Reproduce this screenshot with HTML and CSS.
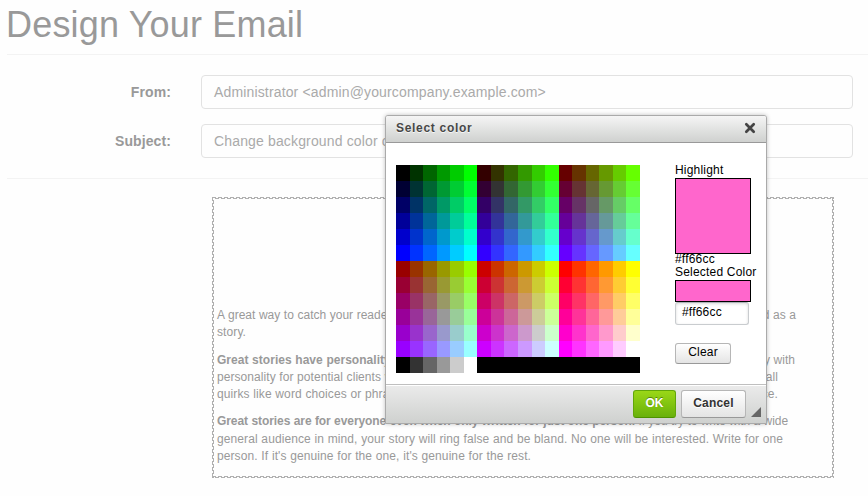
FILE: index.html
```html
<!DOCTYPE html>
<html lang="en">
<head>
<meta charset="utf-8">
<title>Design Your Email</title>
<link rel="stylesheet" href="styles.css">
</head>
<body>
<main class="page">
  <h1 class="title">Design Your Email</h1>
  <form class="fields">
    <div class="field"><label><span class="fit from">From:</span></label><div class="control"><span class="fit">Administrator &lt;admin@yourcompany.example.com&gt;</span></div></div>
    <div class="field"><label><span class="fit from">Subject:</span></label><div class="control"><span class="fit">Change background color of</span></div></div>
  </form>
  <article class="letter">
    <p>
      <span class="line l1">A great way to catch your reader's attention is to tell a story. Everything you consider writing can be told as a</span>
      <span class="line l2">story.</span>
    </p>
    <p>
      <span class="line l3"><b>Great stories have personality.</b> Consider telling a great story that provides personality. Writing a story with</span>
      <span class="line l4">personality for potential clients will assists with making a relationship connection. This shows up in small</span>
      <span class="line l5">quirks like word choices or phrases. Write from your point of view, not from someone else's experience.</span>
    </p>
    <p>
      <span class="line l6"><b>Great stories are for everyone even when only written for just one person.</b> If you try to write with a wide</span>
      <span class="line l7">general audience in mind, your story will ring false and be bland. No one will be interested. Write for one</span>
      <span class="line l8">person. If it's genuine for the one, it's genuine for the rest.</span>
    </p>
  </article>
</main>
<section class="dialog">
  <header class="dialog-head">
    <span>Select color</span>
    <svg class="close" width="12" height="12" viewBox="0 0 12 12"><path d="M2.3 2.3 9.7 9.7M9.7 2.3 2.3 9.7" stroke="#444" stroke-width="2.7" stroke-linecap="round"/></svg>
  </header>
  <div class="dialog-body">
    <div class="palette" id="palette"></div>
    <div class="picked">
      <div class="label">Highlight</div>
      <div class="swatch big"></div>
      <div class="label">#ff66cc</div>
      <div class="label wide">Selected Color</div>
      <div class="swatch small"></div>
      <div class="hex">#ff66cc</div>
      <div class="clear">Clear</div>
    </div>
  </div>
  <footer class="dialog-foot">
    <div class="btn ok">OK</div>
    <div class="btn cancel">Cancel</div>
    <svg class="grip" width="10" height="10" viewBox="0 0 10 10"><path d="M10 0V10H0Z" fill="#666"/></svg>
  </footer>
</section>
<script src="script.js"></script>
</body>
</html>
```
FILE: styles.css
```css
* { box-sizing: border-box; }
body {
  margin: 0;
  width: 868px;
  height: 496px;
  overflow: hidden;
  position: relative;
  background: #fefefe;
  font-family: "Liberation Sans", Arial, sans-serif;
}
.page { padding-left: 7px; }
.title {
  margin: 0;
  height: 55px;
  padding-top: 5px;
  border-bottom: 1px solid #f3f3f3;
  font-size: 36px;
  line-height: 40px;
  font-weight: 400;
  letter-spacing: .18px;
  text-indent: -1px;
  color: #999;
}
.fields {
  height: 124px;
  padding-top: 20px;
  border-bottom: 1px solid #f3f3f3;
  font-size: 14px;
}
.field { display: flex; height: 34px; margin-bottom: 15px; line-height: 34px; }
.field label { width: 164px; font-weight: 700; color: #999; display: flex; justify-content: flex-end; }
.control {
  width: 652px;
  margin-left: 30px;
  padding-left: 12px;
  border: 1px solid #e2e2e2;
  border-radius: 4px;
  line-height: 33px;
  color: #aaa;
}
.fit { display: block; white-space: nowrap; letter-spacing: .15px; }
.from { letter-spacing: .1px; }
.letter {
  --h: #b0b0b0 0 4px, transparent 4px 6px;
  --i: #b0b0b0 0 1px, transparent 1px 3px, #b0b0b0 3px 6px;
  width: 622px;
  height: 281px;
  margin: 18px 0 0 205px;
  padding: 110px 5px 0;
  font-size: 12px;
  color: #999;
  background:
    repeating-linear-gradient(90deg, var(--h)) 0 0 / 100% 1px no-repeat,
    repeating-linear-gradient(90deg, var(--i)) 0 1px / 100% 1px no-repeat,
    repeating-linear-gradient(90deg, var(--h)) 0 279px / 100% 1px no-repeat,
    repeating-linear-gradient(90deg, var(--i)) 0 280px / 100% 1px no-repeat,
    repeating-linear-gradient(180deg, var(--h)) 0 0 / 1px 100% no-repeat,
    repeating-linear-gradient(180deg, var(--i)) 1px 0 / 1px 100% no-repeat,
    repeating-linear-gradient(180deg, var(--h)) 620px 0 / 1px 100% no-repeat,
    repeating-linear-gradient(180deg, var(--i)) 621px 0 / 1px 100% no-repeat;
}
.letter p { margin: 0 0 10px; }
.line {
  display: block;
  height: 17.3px;
  line-height: 17.3px;
  letter-spacing: .1px;
  text-align-last: justify;
}
.l1 { width: 579px; letter-spacing: -.02px; }
.l2 { width: 28px; }
.l3 { width: 578px; letter-spacing: .03px; }
.l4 { width: 561px; letter-spacing: .06px; }
.l5 { width: 561px; }
.l6 { width: 571px; letter-spacing: -.07px; }
.l7 { width: 566px; }
.l8 { width: 314px; letter-spacing: .08px; }
.dialog {
  position: absolute;
  left: 385px;
  top: 115px;
  width: 382px;
  height: 309px;
  border: 1px solid #aaa;
  border-radius: 3px 3px 0 0;
  background: #fff;
  box-shadow: 0 0 4px rgba(0, 0, 0, .25);
  font-size: 12px;
  color: #000;
}
.dialog-head {
  display: flex;
  justify-content: space-between;
  height: 27px;
  padding: 0 10px;
  border-bottom: 1px solid #999;
  border-radius: 2px 2px 0 0;
  background: linear-gradient(#f5f5f5, #cfd1cf);
  font-weight: 700;
  line-height: 24px;
  color: #474747;
  text-shadow: 0 1px 0 rgba(255, 255, 255, .75);
  letter-spacing: .7px;
}
.close { margin-top: 6px; }
.dialog-body { display: flex; height: 241px; padding: 22px 0 0 10px; }
.palette { display: grid; flex: none; grid-template-columns: repeat(18, 1fr); grid-auto-rows: 16px; width: 244px; }
.picked { width: 90px; margin-left: 35px; letter-spacing: .2px; white-space: nowrap; }
.label { height: 13px; line-height: 10px; }
.label.wide { line-height: 10px; }
.swatch { width: 76px; border: 1px solid #000; background: #f6c; }
.big { height: 76px; }
.small { height: 22px; }
.hex {
  width: 74px;
  height: 23px;
  padding-left: 6px;
  border: 1px solid #c9cccf;
  border-top-color: #aeb3b9;
  border-radius: 3px;
  line-height: 18px;
  box-shadow: inset 0 1px 3px rgba(0, 0, 0, .15);
}
.clear {
  width: 56px;
  height: 21px;
  margin-top: 18px;
  border: 1px solid #b6b6b6;
  border-bottom-color: #999;
  border-radius: 3px;
  background: linear-gradient(#fff, #e4e4e4);
  line-height: 17px;
  text-align: center;
}
.dialog-foot {
  display: flex;
  height: 39px;
  padding: 5px 5px 0 247px;
  border-top: 1px solid #bfbfbf;
  background: linear-gradient(#ebebeb, #cfd1cf);
  box-shadow: inset 0 1px 0 #fff;
}
.btn {
  height: 28px;
  border: 1px solid #b6b6b6;
  border-bottom-color: #999;
  border-radius: 3px;
  background: linear-gradient(#fff, #e4e4e4);
  font-weight: 700;
  line-height: 24px;
  text-align: center;
  color: #333;
}
.ok {
  width: 43px;
  border-color: #62a60a #62a60a #4d9200;
  background: linear-gradient(#9ad717, #69b10b);
  color: #fff;
  text-shadow: 0 -1px 0 #55830c;
}
.cancel { width: 65px; margin-left: 5px; text-shadow: 0 1px 0 #fff; letter-spacing: .2px; }
.grip { margin: 17px 0 0 5px; }
```
FILE: script.js
```js
// Web-safe colours: three blocks of red, green by column, blue by row.
const palette = document.getElementById("palette");
for (let row = 0; row < 13; row++) {
  for (let col = 0; col < 18; col++) {
    const block = Math.floor(col / 6);
    let r = (block + (row > 5 ? 3 : 0)) * 51;
    let g = (col % 6) * 51;
    let b = (row % 6) * 51;
    if (row === 12) r = g = b = block === 0 ? col * 51 : 0;
    const cell = document.createElement("div");
    cell.style.background = `rgb(${r}, ${g}, ${b})`;
    palette.appendChild(cell);
  }
}
```
